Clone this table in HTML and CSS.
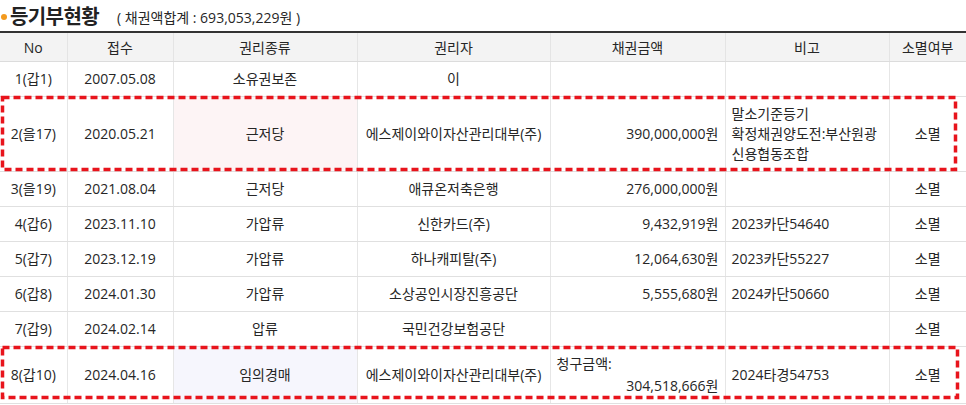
FILE: index.html
```html
<!DOCTYPE html>
<html lang="ko">
<head>
<meta charset="utf-8">
<link rel="stylesheet" href="styles.css">
</head>
<body>
<div class="title-bar">
  <span class="dot"></span>
  <span class="title">등기부현황</span>
  <span class="sum">( 채권액합계 : 693,053,229원 )</span>
</div>
<table class="reg">
  <colgroup>
    <col class="c1"><col class="c2"><col class="c3"><col class="c4"><col class="c5"><col class="c6"><col class="c7">
  </colgroup>
  <thead>
    <tr><th>No</th><th>접수</th><th>권리종류</th><th>권리자</th><th>채권금액</th><th>비고</th><th>소멸여부</th></tr>
  </thead>
  <tbody>
    <tr><td>1(갑1)</td><td>2007.05.08</td><td>소유권보존</td><td>이</td><td class="amt"></td><td class="note"></td><td></td></tr>
    <tr class="tall"><td class="marked">2(을17)<div class="mark"><svg width="100%" height="100%"><rect x="1.5" y="1.5" width="953" height="72" /></svg></div></td><td>2020.05.21</td><td class="pink">근저당</td><td>에스제이와이자산관리대부(주)</td><td class="amt">390,000,000원</td><td class="note">말소기준등기<br>확정채권양도전:부산원광<br>신용협동조합</td><td>소멸</td></tr>
    <tr><td>3(을19)</td><td>2021.08.04</td><td>근저당</td><td>애큐온저축은행</td><td class="amt">276,000,000원</td><td class="note"></td><td>소멸</td></tr>
    <tr><td>4(갑6)</td><td>2023.11.10</td><td>가압류</td><td>신한카드(주)</td><td class="amt">9,432,919원</td><td class="note">2023카단54640</td><td>소멸</td></tr>
    <tr><td>5(갑7)</td><td>2023.12.19</td><td>가압류</td><td>하나캐피탈(주)</td><td class="amt">12,064,630원</td><td class="note">2023카단55227</td><td>소멸</td></tr>
    <tr><td>6(갑8)</td><td>2024.01.30</td><td>가압류</td><td>소상공인시장진흥공단</td><td class="amt">5,555,680원</td><td class="note">2024카단50660</td><td>소멸</td></tr>
    <tr><td>7(갑9)</td><td>2024.02.14</td><td>압류</td><td>국민건강보험공단</td><td class="amt"></td><td class="note"></td><td>소멸</td></tr>
    <tr class="last"><td class="marked">8(갑10)<div class="mark"><svg width="100%" height="100%"><rect x="1.5" y="1.5" width="955" height="50" /></svg></div></td><td>2024.04.16</td><td class="lav">임의경매</td><td>에스제이와이자산관리대부(주)</td><td class="amt split"><div class="lbl">청구금액:</div><div class="val">304,518,666원</div></td><td class="note">2024타경54753</td><td>소멸</td></tr>
  </tbody>
</table>
</body>
</html>
```

FILE: styles.css
```css
html, body {
  margin: 0;
  padding: 0;
  background: #fff;
}
body {
  font-family: "Open Sans", "Noto Sans CJK KR", sans-serif;
  font-size: 14px;
  color: #262626;
}
.title-bar {
  display: flex;
  align-items: center;
  height: 31px;
  padding-left: 1px;
}
.dot {
  width: 6px;
  height: 6px;
  border-radius: 50%;
  background: #f39a1e;
  margin-right: 3px;
  margin-top: 3px;
}
.title {
  font-family: "Noto Sans CJK KR", sans-serif;
  font-size: 20px;
  font-weight: 700;
  color: #222;
  letter-spacing: -0.6px;
}
.sum {
  font-size: 14px;
  margin-left: 18px;
  margin-top: 3px;
  color: #262626;
}
.reg {
  width: 966px;
  border-collapse: collapse;
  table-layout: fixed;
  border-top: 2px solid #333;
  border-bottom: 1px solid #ddd;
}
.c1 { width: 67px; }
.c2 { width: 106px; }
.c3 { width: 184px; }
.c4 { width: 193px; }
.c5 { width: 175px; }
.c6 { width: 164px; }
.c7 { width: 77px; }
.reg th {
  background: #f3f3f3;
  font-weight: 400;
  height: 28px;
  padding: 0;
  border-bottom: 1px solid #dcdcdc;
  border-left: 1px solid #e4e4e4;
  text-align: center;
}
.reg td {
  padding: 7px 6px;
  line-height: 20px;
  text-align: center;
  border-bottom: 1px solid #e0e0e0;
  border-left: 1px solid #e6e6e6;
  white-space: nowrap;
}
.reg th:first-child, .reg td:first-child {
  border-left: none;
}
.reg td.amt { text-align: right; }
.reg td.note { text-align: left; }
.reg td.pink { background: #fdf4f5; }
.reg td.lav { background: #f6f6fd; }
.reg tr.last td { padding-top: 6px; padding-bottom: 6px; }
.split .lbl { text-align: left; line-height: 22px; }
.split .val { text-align: right; line-height: 22px; }
.marked { position: relative; }
.mark {
  position: absolute;
  left: 1px;
  top: -1px;
  bottom: -1px;
  width: 958px;
  pointer-events: none;
  z-index: 2;
}
.mark svg { display: block; overflow: visible; }
.mark rect {
  fill: none;
  stroke: #e8141c;
  stroke-width: 3.5;
  stroke-dasharray: 7 4;
}
```
